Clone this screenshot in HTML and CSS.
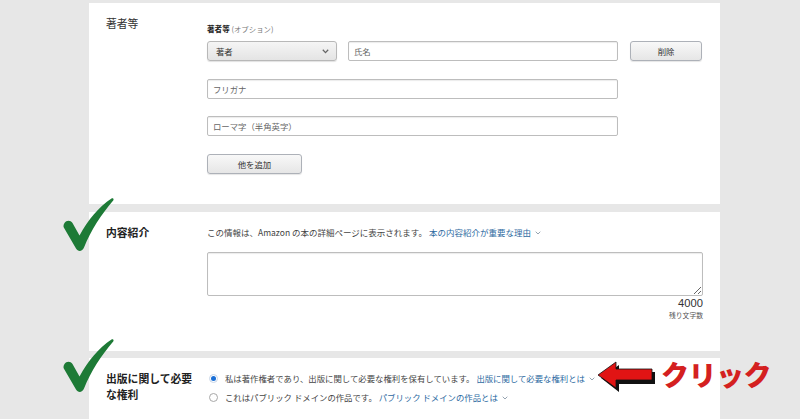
FILE: index.html
```html
<!DOCTYPE html>
<html>
<head>
<meta charset="utf-8">
<link rel="stylesheet" href="styles.css">
</head>
<body>
<div class="page">
  <section class="panel p1">
    <div class="label">著者等</div>
    <div class="content">
      <div class="subtitle"><b>著者等</b> <span class="opt">(オプション)</span></div>
      <div class="row">
        <div class="select"><span>著者</span><svg class="sel-chev" width="7" height="5" viewBox="0 0 7 5"><path d="M0.8 0.8 L3.5 3.6 L6.2 0.8" fill="none" stroke="#666" stroke-width="1.3"/></svg></div>
        <div class="input name">氏名</div>
        <div class="btn del">削除</div>
      </div>
      <div class="input wide gap17">フリガナ</div>
      <div class="input wide gap17b">ローマ字（半角英字）</div>
      <div class="btn add">他を追加</div>
    </div>
  </section>

  <section class="panel p2">
    <div class="label bold">内容紹介</div>
    <div class="content">
      <div class="desc">この情報は、Amazon の本の詳細ページに表示されます。 <span class="link">本の内容紹介が重要な理由<svg class="chev" width="6" height="4" viewBox="0 0 6 4"><path d="M0.7 0.7 L3 3 L5.3 0.7" fill="none" stroke="#8a9aa8" stroke-width="0.9"/></svg></span></div>
      <textarea class="area"></textarea>
      <div class="count">4000</div>
      <div class="remain">残り文字数</div>
    </div>
  </section>

  <section class="panel p3">
    <div class="label bold">出版に関して必要<br>な権利</div>
    <div class="content">
      <div class="radio-row"><span class="radio on"></span>私は著作権者であり、出版に関して必要な権利を保有しています。 <span class="link">出版に関して必要な権利とは<svg class="chev" width="6" height="4" viewBox="0 0 6 4"><path d="M0.7 0.7 L3 3 L5.3 0.7" fill="none" stroke="#8a9aa8" stroke-width="0.9"/></svg></span></div>
      <div class="radio-row second"><span class="radio"></span>これはパブリック ドメインの作品です。 <span class="link">パブリック ドメインの作品とは<svg class="chev" width="6" height="4" viewBox="0 0 6 4"><path d="M0.7 0.7 L3 3 L5.3 0.7" fill="none" stroke="#8a9aa8" stroke-width="0.9"/></svg></span></div>
    </div>
  </section>
</div>

<svg class="check check1" width="52" height="55" viewBox="0 0 52 55"><path d="M1.5 25 C3.5 22 7.5 22 9.5 25 L16.5 37.5 C25 21.5 36 9 48.5 0.5 C50 -0.3 51.2 1.2 50.2 2.6 C38.5 16.5 28 32 21 49.5 C19.3 53.8 15 54 13 50.5 L0.8 29.5 C0.2 28 0.5 26.3 1.5 25 Z" fill="#1d7a36"/></svg>
<svg class="check check2" width="52" height="55" viewBox="0 0 52 55"><path d="M1.5 25 C3.5 22 7.5 22 9.5 25 L16.5 37.5 C25 21.5 36 9 48.5 0.5 C50 -0.3 51.2 1.2 50.2 2.6 C38.5 16.5 28 32 21 49.5 C19.3 53.8 15 54 13 50.5 L0.8 29.5 C0.2 28 0.5 26.3 1.5 25 Z" fill="#1d7a36"/></svg>

<svg class="arrow" width="64" height="36" viewBox="0 0 64 36">
  <path d="M5 18 L23 5 L23 12 L59 12 L59 24 L23 24 L23 32 Z" fill="#111"/>
  <path d="M2 15 L20 2 L20 9 L56 9 L56 20 L20 20 L20 28 Z" fill="#e11414" stroke="#111" stroke-width="0.8"/>
</svg>
<div class="click">クリック</div>
</body>
</html>
```

FILE: styles.css
```css
html, body {
  margin: 0;
  padding: 0;
}
body {
  background: #e7e7e7;
  font-family: "Noto Sans CJK JP", "Noto Sans", sans-serif;
  color: #444;
  position: relative;
  height: 419px;
  overflow: hidden;
}
.page {
  margin-left: 89px;
  width: 631px;
  padding-top: 3px;
  display: flex;
  flex-direction: column;
}
.panel {
  background: #fff;
  display: flex;
  padding-left: 17px;
}
.p1 { padding-top: 13px; padding-bottom: 30px; }
.p2 { margin-top: 8px; padding-top: 13px; padding-bottom: 31px; }
.p3 { margin-top: 7px; padding-top: 12px; padding-bottom: 14px; }

.label {
  width: 101px;
  flex: none;
  font-size: 10.8px;
  line-height: 14px;
  color: #333;
}
.label.bold { font-weight: 700; color: #222; }
.p3 .label { line-height: 16px; }

.content {
  width: 496px;
  display: flex;
  flex-direction: column;
  align-items: flex-start;
}

.subtitle {
  margin-top: 7px;
  font-size: 7.6px;
  line-height: 12px;
  color: #222;
}
.subtitle .opt { color: #777; font-size: 7.4px; }

.row {
  margin-top: 6px;
  display: flex;
  gap: 11px;
  height: 20px;
  width: 100%;
}
.select {
  box-sizing: border-box;
  width: 130px;
  height: 20px;
  border: 1px solid #b8b8b8;
  border-radius: 3px;
  background: linear-gradient(#f5f5f5, #e4e4e4);
  box-shadow: 0 1px 1px rgba(0,0,0,0.12);
  display: flex;
  align-items: center;
  justify-content: space-between;
  padding: 0 7px 0 8px;
  font-size: 8.4px;
  color: #333;
}
.sel-chev { display: block; }
.input {
  box-sizing: border-box;
  height: 20px;
  border: 1px solid #bdbdbd;
  border-radius: 2px;
  box-shadow: inset 0 1px 1px rgba(0,0,0,0.08);
  background: #fff;
  display: flex;
  align-items: center;
  padding-left: 5px;
  font-size: 8.4px;
  color: #666;
}
.input.name { width: 270px; }
.input.wide { width: 411px; }
.gap17 { margin-top: 18px; }
.gap17b { margin-top: 17px; }
.btn {
  box-sizing: border-box;
  height: 20px;
  border: 1px solid #adb1b8;
  border-radius: 3px;
  background: linear-gradient(#f8f8f8, #e6e6e6);
  box-shadow: 0 1px 1px rgba(0,0,0,0.1);
  display: flex;
  align-items: center;
  justify-content: center;
  font-size: 8.4px;
  color: #333;
}
.btn.del { width: 72px; margin-left: 1px; }
.btn.add { width: 95px; margin-top: 18px; }

.desc {
  font-size: 8.5px;
  line-height: 14px;
  color: #444;
  white-space: nowrap;
}
.link { color: #2d6a9f; }
.chev { margin-left: 4px; vertical-align: 1px; }

.area {
  box-sizing: border-box;
  margin: 13px 0 0 0;
  width: 496px;
  height: 44px;
  border: 1px solid #bdbdbd;
  border-radius: 2px;
  box-shadow: inset 0 1px 1px rgba(0,0,0,0.08);
  resize: vertical;
  padding: 0;
  display: block;
}
.count {
  align-self: flex-end;
  margin-top: 1px;
  font-family: "Liberation Sans", Arial, sans-serif;
  font-size: 11.2px;
  line-height: 13px;
  color: #333;
}
.remain {
  align-self: flex-end;
  font-size: 6.8px;
  line-height: 10px;
  color: #555;
}

.radio-row {
  display: flex;
  align-items: center;
  font-size: 8.4px;
  line-height: 16px;
  color: #444;
  white-space: pre;
}
.radio-row.second { margin-top: 3px; }
.radio {
  box-sizing: border-box;
  width: 9px;
  height: 9px;
  border-radius: 50%;
  border: 1px solid #a8a8a8;
  background: #fff;
  margin: 0 7px 0 2px;
  flex: none;
  position: relative;
}
.radio.on { border-color: #c9d6e8; }
.radio.on::after {
  content: "";
  position: absolute;
  left: 1px;
  top: 1px;
  width: 5px;
  height: 5px;
  border-radius: 50%;
  background: #1a6fd6;
}

.check { position: absolute; left: 63px; }
.check1 { top: 198px; }
.check2 { top: 339px; }
.arrow { position: absolute; left: 596px; top: 360px; }
.click {
  position: absolute;
  left: 661px;
  top: 356px;
  font-size: 28px;
  line-height: 36px;
  font-weight: 900;
  color: #d42020;
  letter-spacing: -0.5px;
  white-space: nowrap;
}
```
